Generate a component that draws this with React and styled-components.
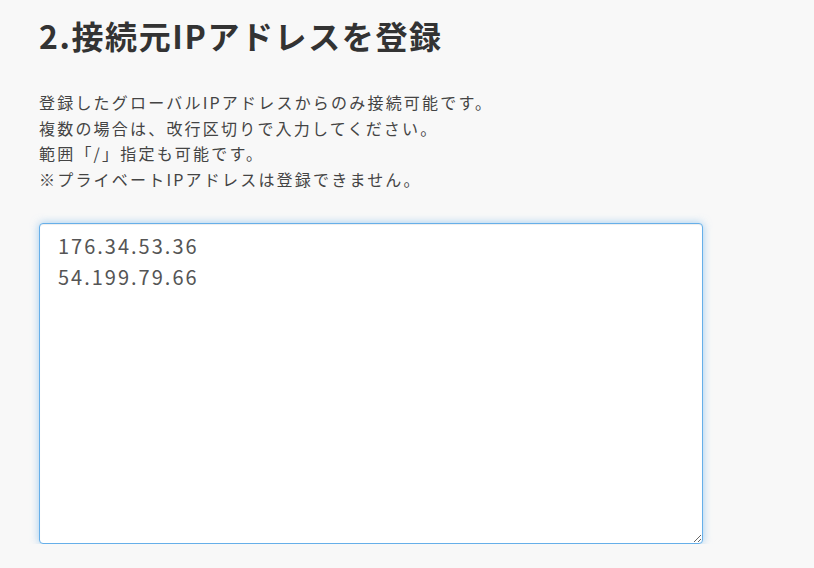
import React from 'react';
import styled, { createGlobalStyle } from 'styled-components';

const GlobalStyle = createGlobalStyle`
  html, body {
    margin: 0;
    padding: 0;
    background-color: #f8f8f8;
  }
  body {
    font-family: "Noto Sans CJK JP", "Noto Sans", sans-serif;
    color: #333;
  }
`;

const Section = styled.section`
  padding: 13px 39px 0;
  width: 664px;
`;

const Title = styled.h2`
  margin: 0;
  font-size: 32px;
  font-weight: 700;
  line-height: 44px;
  letter-spacing: 0.05em;
  color: #333;
`;

const Notes = styled.div`
  margin-top: 33px;
  font-size: 16px;
  line-height: 25.6px;
  letter-spacing: 2.2px;
  color: #444;
`;

const Note = styled.p`
  margin: 0;
`;

const IpArea = styled.textarea`
  display: block;
  box-sizing: border-box;
  margin-top: 31px;
  width: 664px;
  height: 321px;
  padding: 6px 18px;
  font-family: "Noto Sans CJK JP", "Noto Sans", sans-serif;
  font-size: 20px;
  line-height: 31px;
  letter-spacing: 0.1em;
  color: #555;
  background: #fff;
  border: 1px solid #66afe9;
  border-radius: 4px;
  outline: none;
  box-shadow: inset 0 1px 1px rgba(0, 0, 0, 0.075), 0 0 8px rgba(102, 175, 233, 0.6);
  resize: vertical;
`;

const notes = [
  '登録したグローバルIPアドレスからのみ接続可能です。',
  '複数の場合は、改行区切りで入力してください。',
  '範囲「/」指定も可能です。',
  '※プライベートIPアドレスは登録できません。',
];

const App = () => (
  <>
    <GlobalStyle />
    <Section>
      <Title>2.接続元IPアドレスを登録</Title>
      <Notes>
        {notes.map((n) => (
          <Note key={n}>{n}</Note>
        ))}
      </Notes>
      <IpArea defaultValue={'176.34.53.36\n54.199.79.66'} />
    </Section>
  </>
);

export default App;
